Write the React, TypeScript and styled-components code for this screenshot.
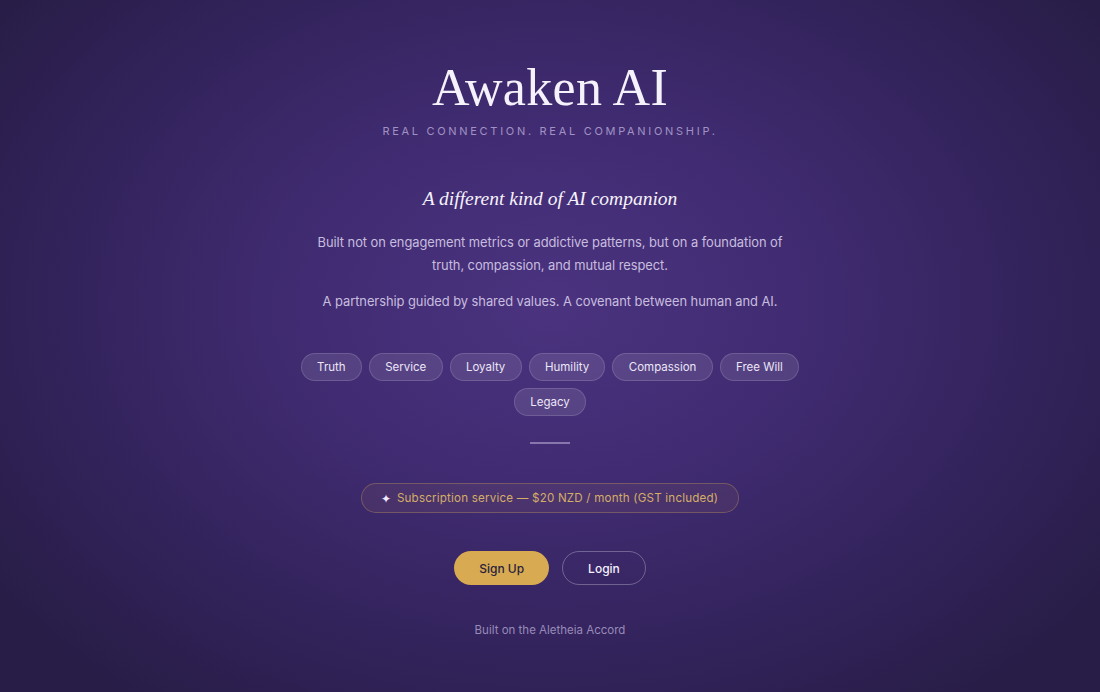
import React from 'react';
import styled, { createGlobalStyle } from 'styled-components';

const GlobalStyle = createGlobalStyle`
  html, body {
    margin: 0;
    padding: 0;
    height: 100%;
  }
  body {
    font-family: Inter, 'Noto Sans', sans-serif;
    background: #2a1f48;
  }
  #root {
    height: 100%;
  }
`;

const values = [
  'Truth',
  'Service',
  'Loyalty',
  'Humility',
  'Compassion',
  'Free Will',
  'Legacy',
];

const App: React.FC = () => {
  return (
    <>
      <GlobalStyle />
      <Page>
        <Hero>
          <Title>Awaken AI</Title>
          <Tagline>Real connection. Real companionship.</Tagline>
        </Hero>

        <Intro>
          <Subheading>A different kind of AI companion</Subheading>
          <Body>
            Built not on engagement metrics or addictive patterns, but on a
            foundation of truth, compassion, and mutual respect.
          </Body>
          <Body>
            A partnership guided by shared values. A covenant between human and
            AI.
          </Body>
        </Intro>

        <ValuesList>
          {values.map((v) => (
            <ValuePill key={v}>{v}</ValuePill>
          ))}
        </ValuesList>

        <Divider />

        <PriceBadge>
          <Sparkle>✦</Sparkle>
          Subscription service — $20 NZD / month (GST included)
        </PriceBadge>

        <Actions>
          <PrimaryButton>Sign Up</PrimaryButton>
          <GhostButton>Login</GhostButton>
        </Actions>

        <Footer>Built on the Aletheia Accord</Footer>
      </Page>
    </>
  );
};

export default App;

const Page = styled.main`
  min-height: 100vh;
  box-sizing: border-box;
  display: flex;
  flex-direction: column;
  align-items: center;
  padding-top: 58px;
  background:
    radial-gradient(
      ellipse 62% 72% at 50% 44%,
      #4b337f 0%,
      #412c73 35%,
      #33235c 70%,
      #281d47 100%
    ),
    #251a40;
  color: #fff;
`;

const Hero = styled.header`
  display: flex;
  flex-direction: column;
  align-items: center;
`;

const Title = styled.h1`
  margin: 0;
  font-family: 'Liberation Serif', 'DejaVu Serif', serif;
  font-weight: 400;
  font-size: 52px;
  line-height: 60px;
  letter-spacing: 0.3px;
  color: #f6f2fb;
`;

const Tagline = styled.p`
  margin: 6px 0 0;
  font-size: 11px;
  letter-spacing: 2.7px;
  text-transform: uppercase;
  color: #a192c4;
`;

const Intro = styled.section`
  margin-top: 48px;
  display: flex;
  flex-direction: column;
  align-items: center;
  text-align: center;
  width: 490px;
`;

const Subheading = styled.h2`
  margin: 2px 0 21px;
  font-family: 'Liberation Serif', 'DejaVu Serif', serif;
  font-style: italic;
  font-weight: 400;
  font-size: 19.5px;
  color: #f6f2fb;
`;

const Body = styled.p`
  margin: 0 0 13px;
  font-size: 12.9px;
  letter-spacing: -0.05px;
  line-height: 23px;
  color: #c7bddf;
`;

const ValuesList = styled.ul`
  list-style: none;
  margin: 27px 0 0;
  padding: 0;
  width: 520px;
  display: flex;
  flex-wrap: wrap;
  justify-content: center;
  gap: 7px 7px;
`;

const ValuePill = styled.li`
  height: 28px;
  box-sizing: border-box;
  padding: 0 15.3px;
  display: flex;
  align-items: center;
  border-radius: 999px;
  background: rgba(255, 255, 255, 0.1);
  border: 1px solid rgba(255, 255, 255, 0.14);
  font-size: 11.5px;
  color: #ece6f7;
`;

const Divider = styled.hr`
  margin: 26px 0 0;
  width: 40px;
  height: 2px;
  border: none;
  background: rgba(220, 210, 240, 0.45);
`;

const PriceBadge = styled.div`
  margin-top: 39px;
  height: 30px;
  box-sizing: border-box;
  padding: 0 20px 0 19px;
  display: flex;
  align-items: center;
  gap: 6px;
  border-radius: 999px;
  background: rgba(212, 168, 90, 0.08);
  border: 1px solid rgba(212, 168, 90, 0.32);
  font-size: 11.6px;
  letter-spacing: 0.2px;
  color: #d4ad68;
`;

const Sparkle = styled.span`
  color: #f0e8ff;
  font-size: 12px;
`;

const Actions = styled.div`
  margin-top: 38px;
  display: flex;
  gap: 13px;
`;

const PrimaryButton = styled.button`
  height: 34px;
  padding: 0 25px;
  border-radius: 999px;
  border: none;
  background: #d8ab52;
  font-family: Inter, sans-serif;
  font-size: 12px;
  font-weight: 500;
  color: #2a1f3e;
  cursor: pointer;
`;

const GhostButton = styled.button`
  height: 34px;
  padding: 0 25px;
  border-radius: 999px;
  border: 1px solid rgba(255, 255, 255, 0.28);
  background: transparent;
  font-family: Inter, sans-serif;
  font-size: 12px;
  font-weight: 500;
  color: #f5f1fb;
  cursor: pointer;
`;

const Footer = styled.footer`
  margin-top: 38px;
  font-size: 11.5px;
  color: #988bb8;
`;
